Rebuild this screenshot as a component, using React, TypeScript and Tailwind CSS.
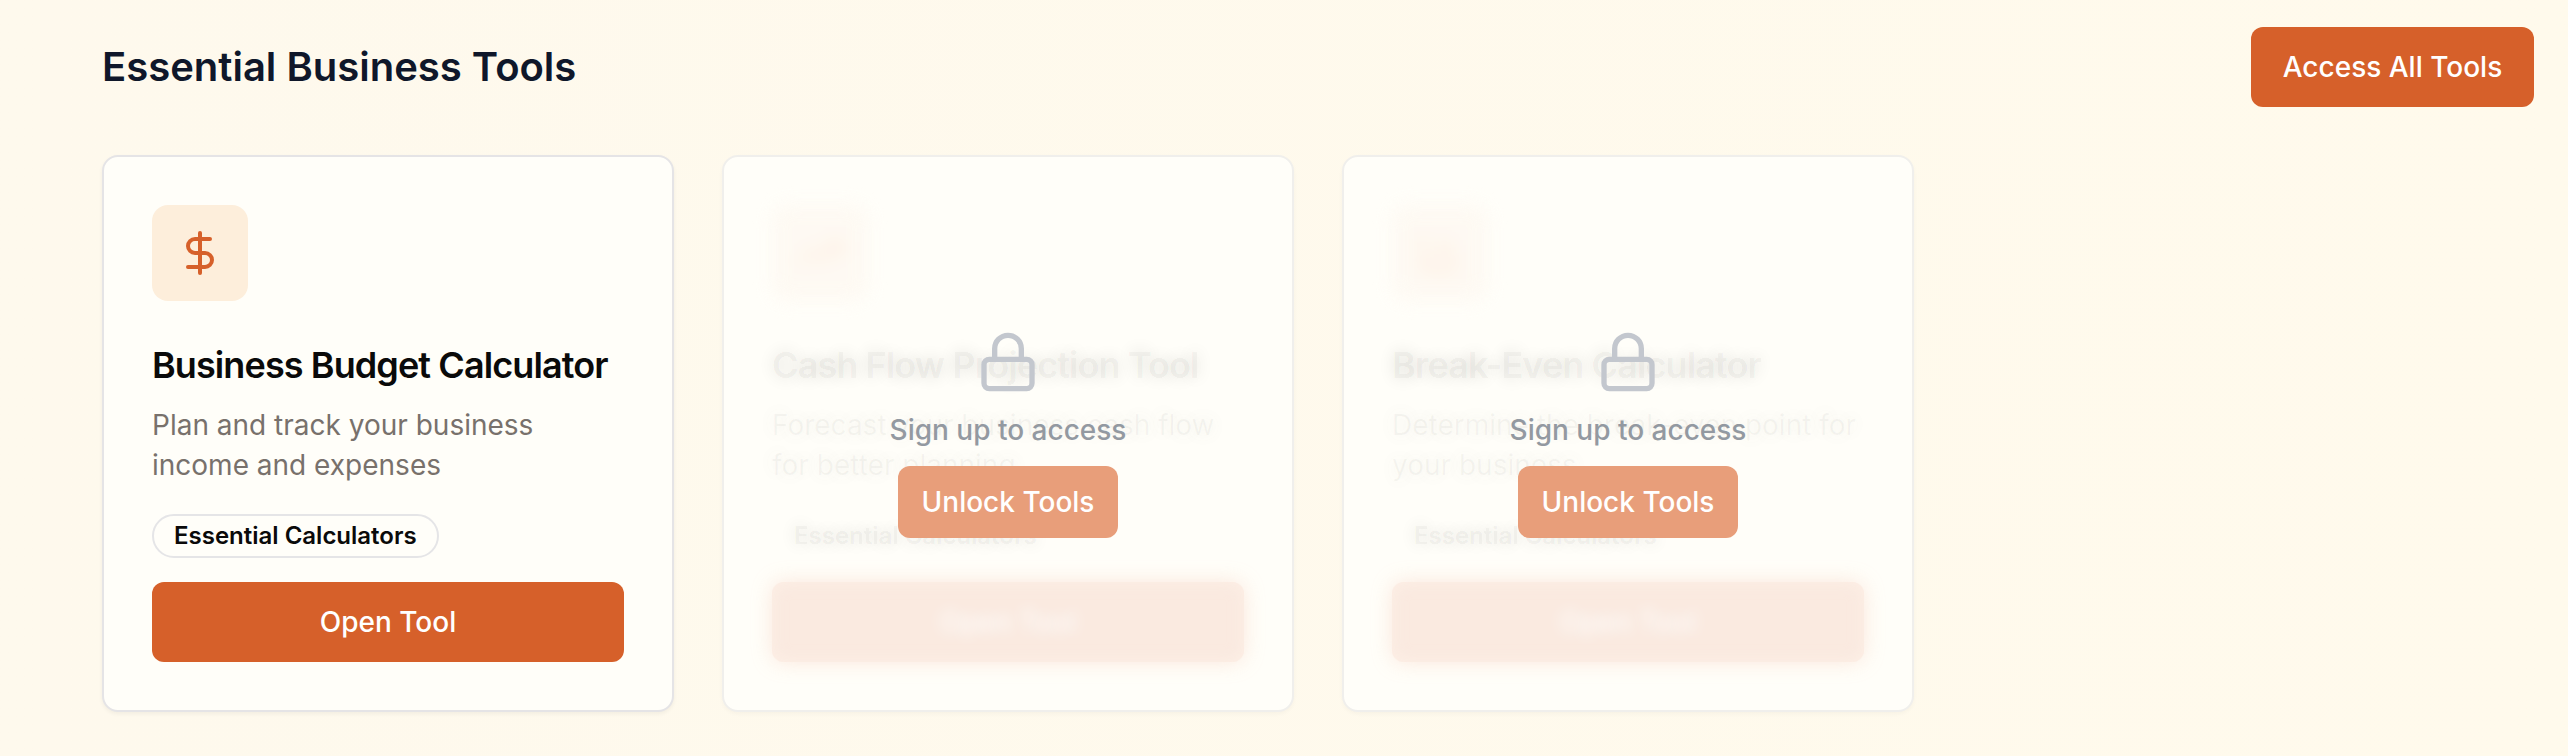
import { ChartColumn, DollarSign, Lock, TrendingUp, type LucideIcon } from "lucide-react";

type Tool = {
  name: string;
  description: string;
  category: string;
  icon: LucideIcon;
  locked: boolean;
};

const tools: Tool[] = [
  {
    name: "Business Budget Calculator",
    description: "Plan and track your business income and expenses",
    category: "Essential Calculators",
    icon: DollarSign,
    locked: false,
  },
  {
    name: "Cash Flow Projection Tool",
    description: "Forecast your business cash flow for better planning",
    category: "Essential Calculators",
    icon: TrendingUp,
    locked: true,
  },
  {
    name: "Break-Even Calculator",
    description: "Determine the break-even point for your business",
    category: "Essential Calculators",
    icon: ChartColumn,
    locked: true,
  },
];

function OpenCard({ tool }: { tool: Tool }) {
  const Icon = tool.icon;
  return (
    <article className="h-[557px] rounded-[16px] border-2 border-[#e5e4e6] bg-[#fffef9] p-12 shadow-[0_2px_4px_rgba(0,0,0,0.05)]">
      <div className="flex size-24 items-center justify-center rounded-[16px] bg-[#fdeedb] text-[#d6602a]">
        <Icon size={48} strokeWidth={2} />
      </div>
      <h3 className="mt-9 text-[36px] leading-[56px] font-semibold tracking-tight whitespace-nowrap text-[#0a0a0a]">
        {tool.name}
      </h3>
      <p className="mt-3 text-[28px] leading-10 text-[#78716c]">{tool.description}</p>
      <div className="mt-[29px] flex">
        <span className="rounded-full border-2 border-[#e5e5e7] px-5 py-1 text-[24px] leading-8 font-semibold text-[#0a0a0a]">
          {tool.category}
        </span>
      </div>
      <button className="mt-6 block h-20 w-full rounded-[12px] bg-[#d6602a] text-[28px] font-medium text-white">
        Open Tool
      </button>
    </article>
  );
}

function LockedCard({ tool }: { tool: Tool }) {
  const Icon = tool.icon;
  return (
    <article className="relative h-[557px] rounded-[16px] border-2 border-[#f0efec] bg-[#fffef9] p-12 shadow-[0_2px_4px_rgba(0,0,0,0.03)]">
      <div className="flex size-24 items-center justify-center rounded-[16px] bg-[#fef9f2] text-[#fde9dc] opacity-85 blur-[9px]">
        <Icon size={48} strokeWidth={2} />
      </div>
      <h3 className="mt-9 text-[36px] leading-[56px] font-semibold tracking-tight whitespace-nowrap text-black/[0.055] [text-shadow:0_0_16px_rgba(0,0,0,0.12)]">
        {tool.name}
      </h3>
      <p className="mt-3 text-[28px] leading-10 text-[#78716c]/[0.06] [text-shadow:0_0_16px_rgba(120,113,108,0.1)]">
        {tool.description}
      </p>
      <div className="mt-[29px] flex">
        <span className="rounded-full border-2 border-transparent px-5 py-1 text-[24px] leading-8 font-semibold text-black/[0.055] [text-shadow:0_0_16px_rgba(0,0,0,0.12)]">
          {tool.category}
        </span>
      </div>
      <button className="mt-6 block h-20 w-full rounded-[12px] bg-[#faeae0] text-[28px] font-medium text-transparent shadow-[0_0_20px_rgba(250,222,208,0.7),inset_0_0_16px_rgba(255,242,234,0.7)] [text-shadow:0_0_14px_rgba(255,255,255,0.95)]">
        Open Tool
      </button>
      <div className="absolute inset-0 flex flex-col items-center justify-center gap-4">
        <Lock size={64} strokeWidth={2} className="text-[#c3c7ce]" />
        <p className="text-[28px] leading-10 font-medium text-[#9399a1]">Sign up to access</p>
        <button className="h-[72px] w-[220px] rounded-[12px] bg-[#e89e7a] text-[28px] font-medium text-white">
          Unlock Tools
        </button>
      </div>
    </article>
  );
}

export default function App() {
  return (
    <main className="h-[756px] w-[2568px] overflow-hidden bg-linear-to-r from-[#fef9ed] to-[#fffaec] pt-[27px] pr-[34px] pl-[102px] font-['Inter',sans-serif]">
      <header className="flex h-20 items-center justify-between">
        <h2 className="text-[40px] leading-[56px] font-semibold text-[#0f172a]">Essential Business Tools</h2>
        <button className="h-20 w-[283px] rounded-[12px] bg-[#d6602a] text-[28px] font-medium whitespace-nowrap text-white">
          Access All Tools
        </button>
      </header>
      <section className="mt-12 grid grid-cols-4 gap-12">
        {tools.map((tool) =>
          tool.locked ? <LockedCard key={tool.name} tool={tool} /> : <OpenCard key={tool.name} tool={tool} />
        )}
      </section>
    </main>
  );
}
